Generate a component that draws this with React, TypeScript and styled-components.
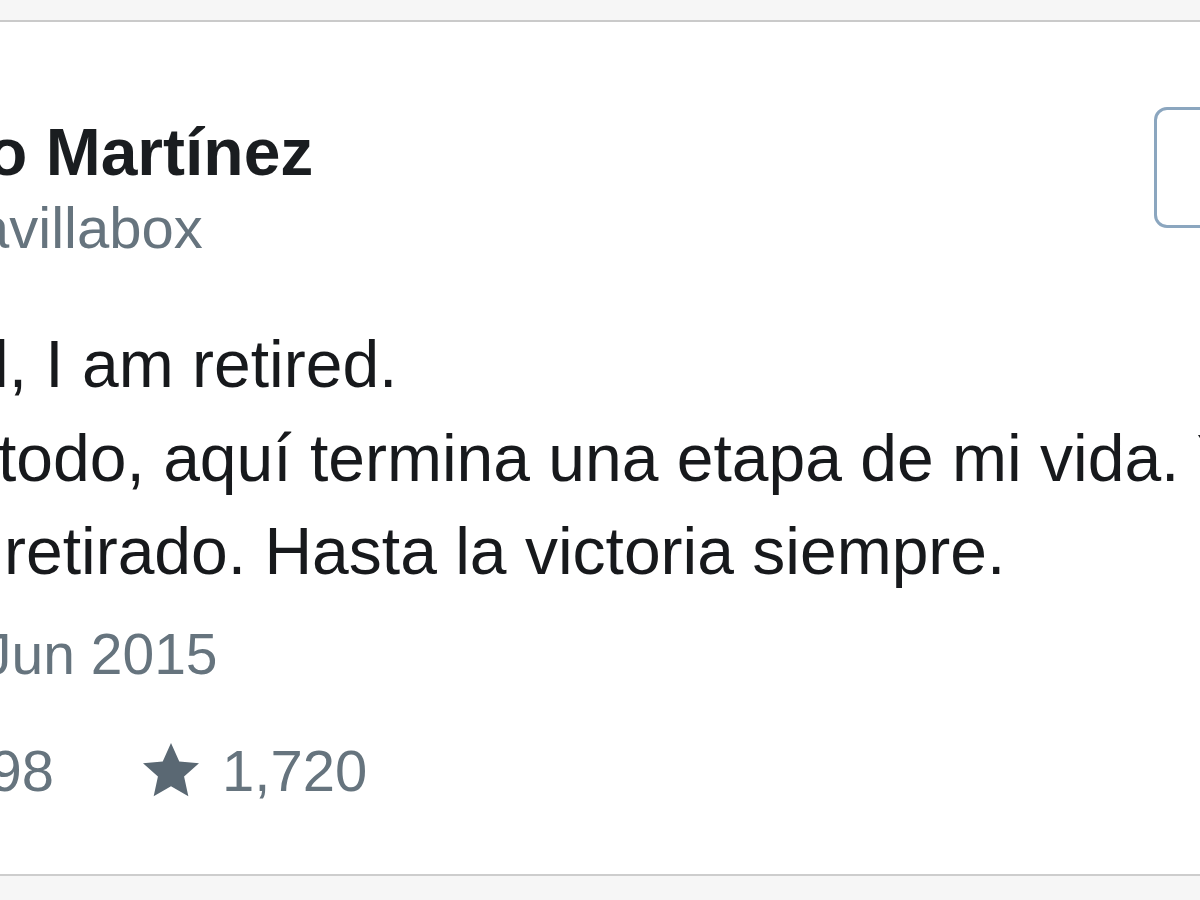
import React from 'react';
import styled, { createGlobalStyle } from 'styled-components';

const GlobalStyle = createGlobalStyle`
  html, body {
    margin: 0;
    padding: 0;
    background: #f6f6f6;
  }

  body {
    font-family: 'Liberation Sans', Arial, Helvetica, sans-serif;
    -webkit-font-smoothing: antialiased;
  }
`;

const Page = styled.div`
  width: 1200px;
  height: 900px;
  padding-top: 20px;
  box-sizing: border-box;
  overflow: hidden;
`;

const Card = styled.article`
  display: flex;
  flex-direction: column;
  padding: 85px 0 63px;
  background: #ffffff;
  border-top: 2px solid #cacaca;
  border-bottom: 2px solid #cdcdcd;
  overflow: hidden;
  white-space: nowrap;
`;

const Header = styled.header`
  display: flex;
  justify-content: space-between;
  align-items: flex-start;
`;

const Identity = styled.div`
  display: flex;
  flex-direction: column;
  padding-top: 8px;
`;

const Name = styled.div<{ $shift: number }>`
  margin-left: ${(p) => p.$shift}px;
  font-size: 66px;
  line-height: 75px;
  font-weight: 700;
  color: #1a1d20;
`;

const Handle = styled.div<{ $shift: number }>`
  margin-left: ${(p) => p.$shift}px;
  font-size: 58px;
  line-height: 76px;
  color: #66747e;
`;

const FollowButton = styled.button`
  display: flex;
  align-items: center;
  justify-content: flex-end;
  flex-shrink: 0;
  width: 200px;
  height: 121px;
  margin-right: -154px;
  padding: 0 24px;
  background: #ffffff;
  border: 3px solid #8ba6bf;
  border-radius: 13px;
  font-family: inherit;
  font-size: 40px;
  font-weight: 700;
  color: #55acee;
`;

const Body = styled.div`
  margin-top: 52px;
  display: flex;
  flex-direction: column;
`;

const Line = styled.div<{ $shift: number }>`
  margin-left: ${(p) => p.$shift}px;
  font-size: 66px;
  line-height: 93.5px;
  color: #17191c;
`;

const Timestamp = styled.div<{ $shift: number }>`
  margin-top: 15px;
  margin-left: ${(p) => p.$shift}px;
  font-size: 57px;
  line-height: 80px;
  color: #66747e;
`;

const Stats = styled.div`
  display: flex;
  align-items: center;
  height: 80px;
  margin-top: 37.5px;
  font-size: 58px;
  color: #66747e;
`;

const Count = styled.span<{ $shift: number }>`
  margin-left: ${(p) => p.$shift}px;
  line-height: 80px;
`;

const StarIcon = styled.svg`
  flex-shrink: 0;
  width: 64px;
  height: 64px;
  margin: 0 19px 0 85px;
  fill: #5a6873;
`;

export default function App() {
  return (
    <Page>
      <GlobalStyle />
      <Card>
        <Header>
          <Identity>
            <Name $shift={-13}>o Martínez</Name>
            <Handle $shift={-23}>avillabox</Handle>
          </Identity>
          <FollowButton>Follow</FollowButton>
        </Header>
        <Body>
          <Line $shift={-6}>l, I am retired.</Line>
          <Line $shift={-2}>todo, aquí termina una etapa de mi vida. Ya</Line>
          <Line $shift={4}>retirado. Hasta la victoria siempre.</Line>
        </Body>
        <Timestamp $shift={-17}>Jun 2015</Timestamp>
        <Stats>
          <Count $shift={-10.5}>98</Count>
          <StarIcon viewBox="0 0 24 24">
            <polygon points="12,1.5 15.1,8.4 22.5,9.1 16.9,14.1 18.5,21.5 12,17.7 5.5,21.5 7.1,14.1 1.5,9.1 8.9,8.4" />
          </StarIcon>
          <Count $shift={0}>1,720</Count>
        </Stats>
      </Card>
    </Page>
  );
}
